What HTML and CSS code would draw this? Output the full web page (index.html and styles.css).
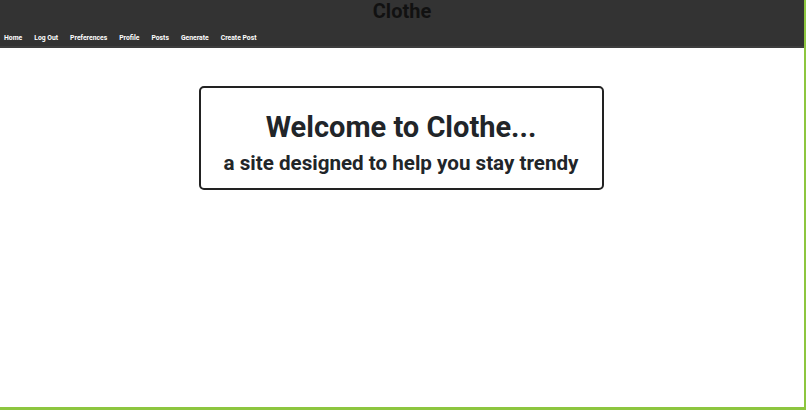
FILE: index.html
```html
<!DOCTYPE html>
<html>
<head>
<meta charset="utf-8">
<link rel="stylesheet" href="styles.css">
</head>
<body>
<div class="frame">
  <header class="header">
    <h1 class="brand">Clothe</h1>
    <nav class="nav">
      <a href="#">Home</a>
      <a href="#">Log Out</a>
      <a href="#">Preferences</a>
      <a href="#">Profile</a>
      <a href="#">Posts</a>
      <a href="#">Generate</a>
      <a href="#">Create Post</a>
    </nav>
  </header>
  <main class="main">
    <section class="welcome">
      <h2 class="welcome-title">Welcome to Clothe...</h2>
      <p class="welcome-sub">a site designed to help you stay trendy</p>
    </section>
  </main>
</div>
</body>
</html>
```
FILE: styles.css
```css
html, body {
  margin: 0;
  padding: 0;
  background: #8dc63f;
}
body {
  width: 806px;
  height: 410px;
  overflow: hidden;
  font-family: Roboto, "Liberation Sans", Arial, sans-serif;
}
.frame {
  width: 804px;
  height: 407px;
  background: #ffffff;
  display: flex;
  flex-direction: column;
}
.header {
  background: #333333;
  height: 46px;
  border-bottom: 2px solid #3d3d3d;
  display: flex;
  flex-direction: column;
}
.brand {
  margin: 0;
  text-align: center;
  font-size: 20px;
  line-height: 22px;
  font-weight: 700;
  color: #111111;
}
.nav {
  display: flex;
  gap: 12px;
  padding: 12px 0 0 4px;
}
.nav a {
  color: #ffffff;
  text-decoration: none;
  font-size: 6.8px;
  font-weight: 700;
  line-height: 9px;
}
.main {
  display: flex;
  justify-content: center;
  padding: 38px 2px 0 0;
}
.welcome {
  width: 401px;
  height: 100px;
  border: 2px solid #222222;
  border-radius: 5px;
  display: flex;
  flex-direction: column;
  align-items: center;
  color: #212529;
}
.welcome-title {
  margin: 22px 0 0;
  font-size: 29px;
  line-height: 34px;
  font-weight: 700;
}
.welcome-sub {
  margin: 6px 0 0;
  font-size: 20.6px;
  line-height: 26px;
  font-weight: 700;
}
```
